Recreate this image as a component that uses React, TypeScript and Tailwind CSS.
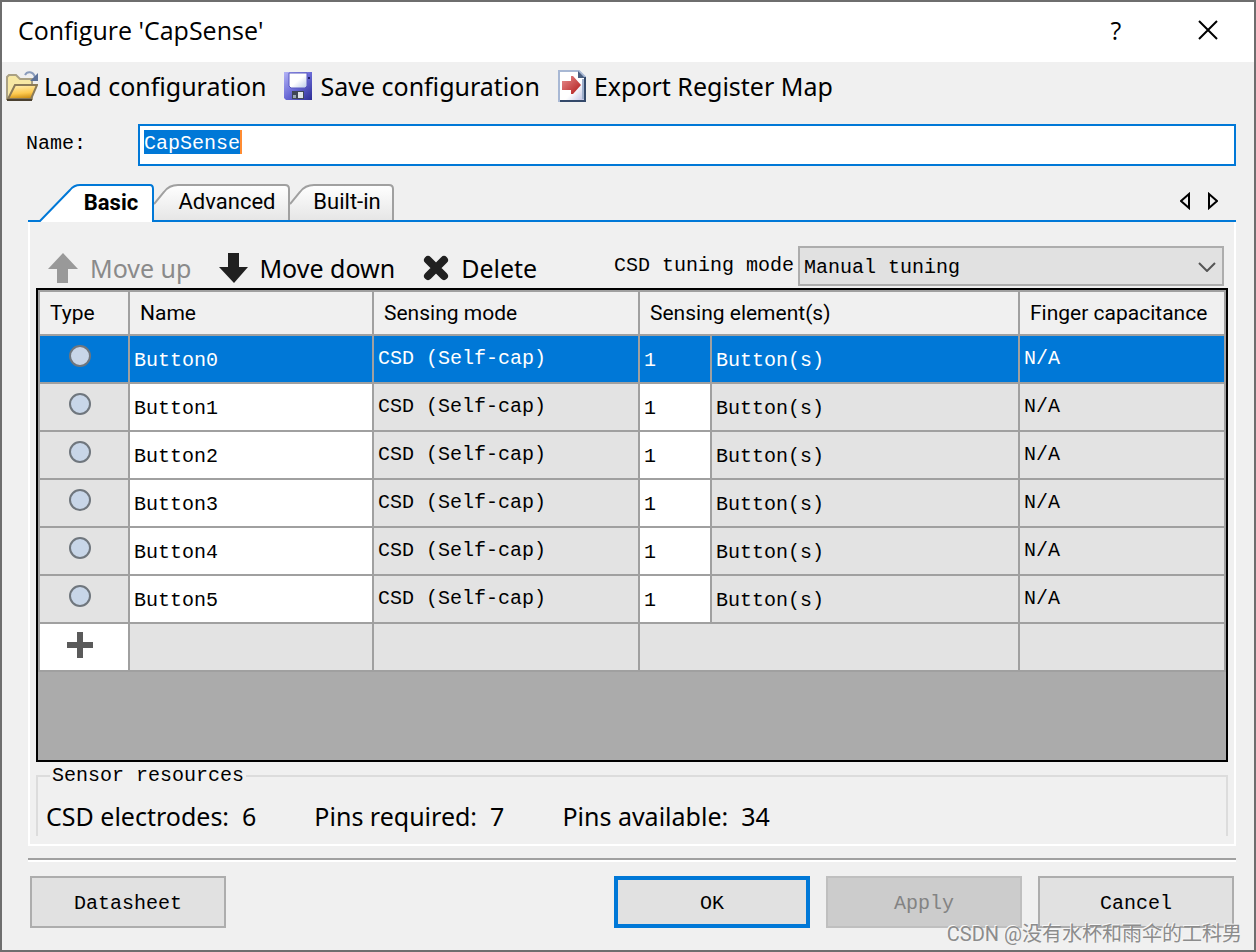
import { useState } from 'react';

const rows = ['Button0', 'Button1', 'Button2', 'Button3', 'Button4', 'Button5'];

const border = 'border-2 border-[#a0a0a0]';
const cell = 'border-2 border-[#a0a0a0] px-1';
const head = 'border-2 border-[#a0a0a0] px-2.5 font-normal whitespace-nowrap';

const FolderIcon = () => (
  <svg width="32" height="32" viewBox="0 0 32 32" aria-hidden="true">
    <defs>
      <linearGradient id="front" x1="0.3" y1="0" x2="0.5" y2="1">
        <stop offset="0" stopColor="#ffeeb0" />
        <stop offset="0.6" stopColor="#fdc94e" />
        <stop offset="1" stopColor="#c98a10" />
      </linearGradient>
    </defs>
    <path d="M1 29V7l2-2h7l4 4h12v20z" fill="#f7e8a4" stroke="#aaa184" strokeWidth="2" />
    <path d="M2 29 9 15h22l-6 14z" fill="url(#front)" stroke="#8a7a58" strokeWidth="2" />
    <path d="M1 30h25" stroke="#4a4030" strokeWidth="2" />
    <path d="M19 5c2-4 8-4 10 2" fill="none" stroke="#8a9cbc" strokeWidth="2" />
    <path d="M32 3v8h-8z" fill="#5d7299" />
  </svg>
);

const SaveIcon = () => (
  <svg width="28" height="28" viewBox="0 0 28 28" aria-hidden="true">
    <defs>
      <linearGradient id="disk" x1="0" y1="0" x2="1" y2="1">
        <stop offset="0" stopColor="#b4b4f6" />
        <stop offset="0.5" stopColor="#6a6ad6" />
        <stop offset="1" stopColor="#2c2c94" />
      </linearGradient>
      <linearGradient id="label" x1="0" y1="0" x2="1" y2="1">
        <stop offset="0.5" stopColor="#ffffff" />
        <stop offset="1" stopColor="#b8c8e8" />
      </linearGradient>
    </defs>
    <path d="M0 0h28v28H2l-2-2z" fill="url(#disk)" />
    <path d="M5 1h18v13l-2 2H7l-2-2z" fill="url(#label)" stroke="#5a5ac0" />
    <path d="M24 5h2v2h-2z" fill="#20206a" />
    <path d="M8 19h12v8H8z" fill="#3f4656" />
    <path d="M14 20h5v6h-5z" fill="#e0e4ea" />
    <path d="M9 23h3v3H9z" fill="#9aa8b4" />
  </svg>
);

const ExportIcon = () => (
  <svg width="28" height="32" viewBox="0 0 28 32" aria-hidden="true">
    <defs>
      <linearGradient id="page" x1="0" y1="0" x2="1" y2="1">
        <stop offset="0.6" stopColor="#ffffff" />
        <stop offset="1" stopColor="#b8bce0" />
      </linearGradient>
      <linearGradient id="red" x1="0" y1="0" x2="1" y2="1">
        <stop offset="0" stopColor="#e89090" />
        <stop offset="1" stopColor="#b01818" />
      </linearGradient>
    </defs>
    <path d="M1 31V1h20l6 6v24z" fill="url(#page)" stroke="#a8b8d4" strokeWidth="2" />
    <path d="M25 9V29" stroke="#9fb0cc" strokeWidth="2" />
    <path d="M2 31h25V7" fill="none" stroke="#34496a" strokeWidth="2" />
    <path d="M20 1v7h7z" fill="#4a5f80" />
    <path d="M4 11h9V6h2l8 9-8 9h-2v-4H4z" fill="url(#red)" />
  </svg>
);

const UpIcon = () => (
  <svg width="30" height="30" viewBox="0 0 30 30" aria-hidden="true">
    <path d="M15 0 30 16H20V30H9V16H0z" fill="#999999" />
  </svg>
);

const DownIcon = () => (
  <svg width="30" height="30" viewBox="0 0 30 30" aria-hidden="true">
    <path d="M9 0H20V14H29L15 30 0 14H9z" fill="#202020" />
  </svg>
);

const DeleteIcon = () => (
  <svg width="26" height="26" viewBox="0 0 26 26" aria-hidden="true">
    <path d="M5 5 21 21M21 5 5 21" stroke="#202020" strokeWidth="8" strokeLinecap="round" />
  </svg>
);

const SensorIcon = () => (
  <svg width="24" height="24" viewBox="0 0 24 24" className="mx-auto" aria-hidden="true">
    <circle cx="12" cy="12" r="10" fill="#c8d6e8" stroke="#6f767d" strokeWidth="2" />
  </svg>
);

const App = () => {
  const [name, setName] = useState('CapSense');
  const [selected, setSelected] = useState(0);

  return (
    <div className="relative flex min-h-screen flex-col border-2 border-[#6e6e6e] bg-[#f0f0f0] font-['Liberation_Mono',monospace] text-[20px] leading-6 text-black">
      <header className="flex h-[60px] items-center bg-white pb-1 pl-4 font-['Open_Sans',sans-serif] text-[25px]">
        <h1 className="grow">Configure 'CapSense'</h1>
        <button className="w-[92px]" aria-label="Help">?</button>
        <button className="flex w-[92px] justify-center" aria-label="Close">
          <svg width="20" height="20" viewBox="0 0 20 20">
            <path d="M1 1 19 19M19 1 1 19" stroke="#000" strokeWidth="2" />
          </svg>
        </button>
      </header>

      <div className="flex h-12 items-center gap-[18px] pl-1 font-['Noto_Sans',sans-serif] text-[25px]">
        <button className="flex items-center gap-1.5">
          <FolderIcon />
          Load configuration
        </button>
        <button className="flex items-center gap-2">
          <SaveIcon />
          Save configuration
        </button>
        <button className="flex items-center gap-2">
          <ExportIcon />
          Export Register Map
        </button>
      </div>

      <div className="mt-3.5 flex pr-[18px] pl-6">
        <label htmlFor="name" className="w-28 pt-2">Name:</label>
        <div className="flex h-[42px] grow border-2 border-[#0078d7] bg-white px-1 pt-1">
          <input
            id="name"
            value={name}
            onChange={(e) => setName(e.target.value)}
            className="h-6 w-[98px] border-r-2 border-[#ff8c32] bg-[#0078d7] pt-1 text-white outline-none"
          />
        </div>
      </div>

      <main className="flex grow flex-col pt-[18px] pr-[18px] pb-[22px] pl-[26px]">
        <nav className="flex h-[38px] border-b-2 border-[#0078d7] font-['Roboto',sans-serif] text-[22px]">
          <button className="relative z-10 -mb-0.5 h-[38px] w-[126px] pl-10 font-bold">
            <svg width="126" height="38" viewBox="0 0 126 38" className="absolute inset-0 -z-10">
              <path d="M0 37H12L42 6Q46 1 52 1H122Q125 1 125 5V38H12z" fill="#fff" />
              <path d="M0 37H12L42 6Q46 1 52 1H122Q125 1 125 5V38" fill="none" stroke="#0078d7" strokeWidth="2" />
            </svg>
            Basic
          </button>
          <button className="relative z-0 w-[136px] pl-2.5">
            <svg width="136" height="36" viewBox="0 0 136 36" className="absolute inset-0 -z-10">
              <defs>
                <linearGradient id="tab" x1="0" y1="0" x2="0" y2="1">
                  <stop offset="0" stopColor="#ffffff" />
                  <stop offset="1" stopColor="#e6e6e6" />
                </linearGradient>
              </defs>
              <path d="M0 20 10 8Q15 1 24 1H131Q135 1 135 5V36H0z" fill="url(#tab)" />
              <path d="M0 20 10 8Q15 1 24 1H131Q135 1 135 5V36" fill="none" stroke="#a0a0a0" strokeWidth="2" />
            </svg>
            Advanced
          </button>
          <button className="relative z-0 w-[104px] pl-2.5">
            <svg width="104" height="36" viewBox="0 0 104 36" className="absolute inset-0 -z-10">
              <path d="M0 20 10 8Q15 1 24 1H99Q103 1 103 5V36H0z" fill="url(#tab)" />
              <path d="M0 20 10 8Q15 1 24 1H99Q103 1 103 5V36" fill="none" stroke="#a0a0a0" strokeWidth="2" />
            </svg>
            Built-in
          </button>
          <div className="flex grow items-start justify-end gap-[18px] pt-2 pr-[18px]">
            <button aria-label="Scroll tabs left">
              <svg width="10" height="18" viewBox="0 0 10 18">
                <path d="M9 2V16L1 9z" fill="none" stroke="#000" strokeWidth="2" />
              </svg>
            </button>
            <button aria-label="Scroll tabs right">
              <svg width="10" height="18" viewBox="0 0 10 18">
                <path d="M1 2V16L9 9z" fill="none" stroke="#000" strokeWidth="2" />
              </svg>
            </button>
          </div>
        </nav>

        <section className="flex grow flex-col border-x-2 border-b-2 border-white px-1.5 pt-6 pb-2">
          <div className="flex h-10 items-center pr-1 pl-3 font-['Noto_Sans',sans-serif] text-[25px]">
            <button disabled className="flex items-center gap-3 pt-1 text-[#8a8a8a]">
              <UpIcon />
              Move up
            </button>
            <button className="ml-7 flex items-center gap-2.5 pt-1">
              <DownIcon />
              Move down
            </button>
            <button className="ml-7 flex items-center gap-3 pt-1">
              <DeleteIcon />
              Delete
            </button>
            <div className="ml-auto flex items-center font-['Liberation_Mono',monospace] text-[20px]">
              <label htmlFor="mode" className="pr-1">CSD tuning mode</label>
              <div className="relative">
                <select id="mode" className="h-10 w-[426px] appearance-none border-2 border-[#adadad] bg-[#e1e1e1] pt-1 pl-1">
                  <option>Manual tuning</option>
                </select>
                <svg width="18" height="10" viewBox="0 0 18 10" className="pointer-events-none absolute top-4 right-2">
                  <path d="M1 1 9 9 17 1" fill="none" stroke="#555" strokeWidth="2" />
                </svg>
              </div>
            </div>
          </div>

          <div className="mt-0.5 grow border-2 border-black bg-[#ababab]">
            <table className="w-full table-fixed border-collapse">
              <colgroup>
                <col className="w-[90px]" />
                <col className="w-[244px]" />
                <col className="w-[266px]" />
                <col className="w-[72px]" />
                <col />
                <col className="w-[206px]" />
              </colgroup>
              <thead className="bg-[#f0f0f0] text-left font-['Roboto',sans-serif] text-[21px]">
                <tr className="h-11">
                  <th className={head}>Type</th>
                  <th className={head}>Name</th>
                  <th className={head}>Sensing mode</th>
                  <th colSpan={2} className={head}>Sensing element(s)</th>
                  <th className={head}>Finger capacitance</th>
                </tr>
              </thead>
              <tbody>
                {rows.map((row, i) => {
                  const active = i === selected;
                  const grey = active ? '' : 'bg-[#e3e3e3]';
                  return (
                    <tr
                      key={row}
                      onClick={() => setSelected(i)}
                      className={`h-12 ${active ? 'bg-[#0078d7] text-white' : 'bg-white'}`}
                    >
                      <td className={`${border} pr-2 pb-1.5 ${grey}`}><SensorIcon /></td>
                      <td className={`${cell} pt-1`}>{row}</td>
                      <td className={`${cell} ${grey}`}>CSD (Self-cap)</td>
                      <td className={`${cell} pt-1`}>1</td>
                      <td className={`${cell} pt-1 ${grey}`}>Button(s)</td>
                      <td className={`${cell} ${grey}`}>N/A</td>
                    </tr>
                  );
                })}
                <tr className="h-12 bg-[#e3e3e3]">
                  <td className={`${border} bg-white pr-2 pb-1`}>
                    <svg width="26" height="26" viewBox="0 0 26 26" className="mx-auto" aria-hidden="true">
                      <path d="M13 0V26M0 13H26" stroke="#5a5a5a" strokeWidth="6" />
                    </svg>
                  </td>
                  <td className={border} />
                  <td className={border} />
                  <td colSpan={2} className={border} />
                  <td className={border} />
                </tr>
              </tbody>
            </table>
          </div>

          <fieldset className="mt-0.5 h-[72px] border-x-2 border-t-2 border-[#dcdcdc] pl-2">
            <legend className="ml-1 px-0.5">Sensor resources</legend>
            <div className="flex gap-[58px] pt-4 font-['Noto_Sans',sans-serif] text-[25px] whitespace-pre">
              <span>CSD electrodes:  6</span>
              <span>Pins required:  7</span>
              <span>Pins available:  34</span>
            </div>
          </fieldset>
        </section>

        <hr className="mt-3 h-1 border-t-2 border-b-2 border-t-[#a0a0a0] border-b-white" />

        <footer className="mt-3.5 flex gap-4 px-0.5">
          <button className="mr-auto h-[52px] w-[196px] border-2 border-[#adadad] bg-[#e1e1e1] pt-1">Datasheet</button>
          <button className="h-[52px] w-[196px] border-4 border-[#0078d7] bg-[#e1e1e1] pt-1">OK</button>
          <button disabled className="h-[52px] w-[196px] border-2 border-[#bfbfbf] bg-[#cccccc] pt-1 text-[#838383]">Apply</button>
          <button className="h-[52px] w-[196px] border-2 border-[#adadad] bg-[#e1e1e1] pt-1">Cancel</button>
        </footer>
      </main>

      <p className="pointer-events-none absolute right-3 bottom-1 font-['Roboto','Noto_Sans_CJK_SC',sans-serif] text-[20px] text-[#8c8c8c] [text-shadow:-1px_-1px_0_#f8f8f8]">
        CSDN @没有水杯和雨伞的工科男
      </p>
    </div>
  );
};

export default App;
